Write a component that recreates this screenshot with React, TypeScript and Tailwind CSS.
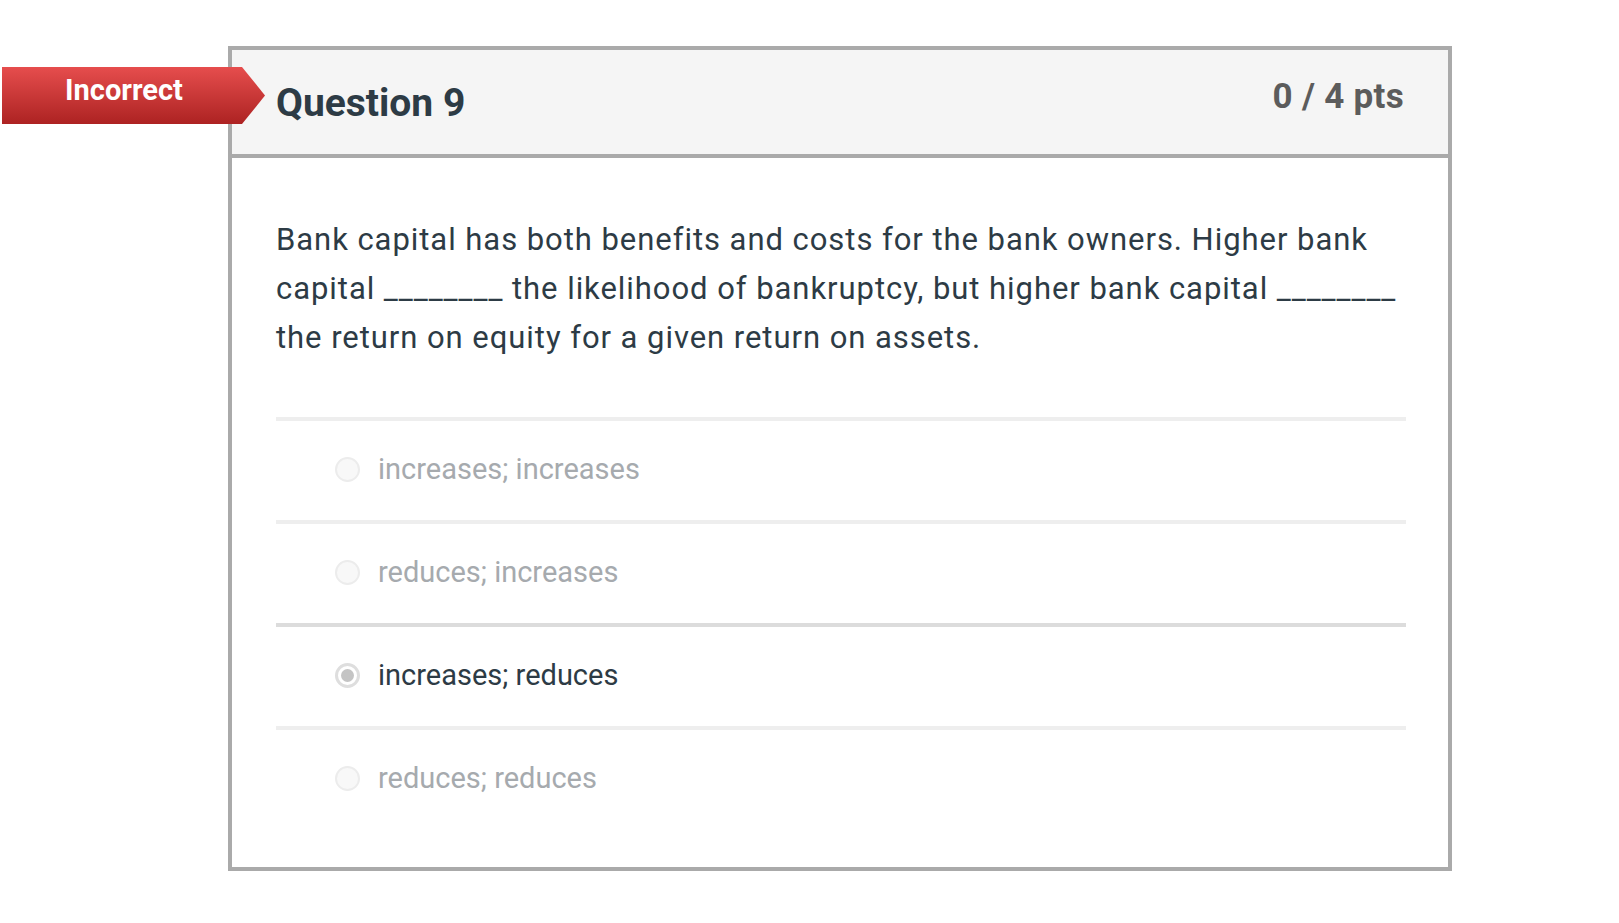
const answers = [
  { text: 'increases; increases', selected: false },
  { text: 'reduces; increases', selected: false },
  { text: 'increases; reduces', selected: true },
  { text: 'reduces; reduces', selected: false },
]

function Radio({ checked }: { checked: boolean }) {
  if (checked) {
    return (
      <span className="w-[25px] h-[25px] rounded-full border-[3px] border-[#dedede] bg-white flex items-center justify-center shrink-0">
        <span className="w-[13px] h-[13px] rounded-full bg-[#c4c4c4]" />
      </span>
    )
  }
  return <span className="w-[25px] h-[25px] rounded-full border-2 border-[#ececec] bg-[#f8f8f8] shrink-0" />
}

export default function App() {
  return (
    <div className="min-h-screen bg-white font-['Roboto','Liberation_Sans',sans-serif]">
      <div className="relative pl-[228px] pt-[46px] pb-[52px]">
        {/* Incorrect ribbon */}
        <div className="absolute left-[2px] top-[67px] w-[263px] h-[57px] bg-linear-to-b from-[#e64d4d] to-[#ad2222] [clip-path:polygon(0_0,240px_0,100%_50%,240px_100%,0_100%)]">
          <div className="w-[244px] pt-[9px] text-center text-white font-bold text-[29px] leading-none">
            Incorrect
          </div>
        </div>

        <div className="w-[1224px] border-4 border-[#aaaaaa] bg-white">
          {/* Header */}
          <div className="h-[108px] bg-[#f5f5f5] border-b-4 border-[#aaaaaa] flex justify-between items-start pt-[29px] pl-[44px] pr-[44px]">
            <h2 className="mt-[5px] text-[39px] leading-none font-bold text-[#2d3b45]">Question 9</h2>
            <div className="text-[35px] leading-none font-bold tracking-[0.3px] text-[#5c5c5c]">0 / 4 pts</div>
          </div>

          {/* Body */}
          <div className="pt-[57px] pb-[38px] pl-[44px] pr-[42px]">
            <p className="text-[31px] leading-[49px] tracking-[0.95px] text-[#2d3b45]">
              Bank capital has both benefits and costs for the bank owners. Higher bank
              <br />
              capital ________ the likelihood of bankruptcy, but higher bank capital ________
              <br />
              the return on equity for a given return on assets.
            </p>

            <div className="mt-[55px]">
              {answers.map((a) => (
                <div
                  key={a.text}
                  className={
                    'h-[103px] border-t-4 flex items-center gap-[18px] pl-[59px] pb-[3px] ' +
                    (a.selected ? 'border-[#dcdcdc]' : 'border-[#eeeeee]')
                  }
                >
                  <Radio checked={a.selected} />
                  <span
                    className={
                      'text-[29px] leading-none ' + (a.selected ? 'text-[#2d3b45]' : 'text-[#a6aaae]')
                    }
                  >
                    {a.text}
                  </span>
                </div>
              ))}
            </div>
          </div>
        </div>
      </div>
    </div>
  )
}
